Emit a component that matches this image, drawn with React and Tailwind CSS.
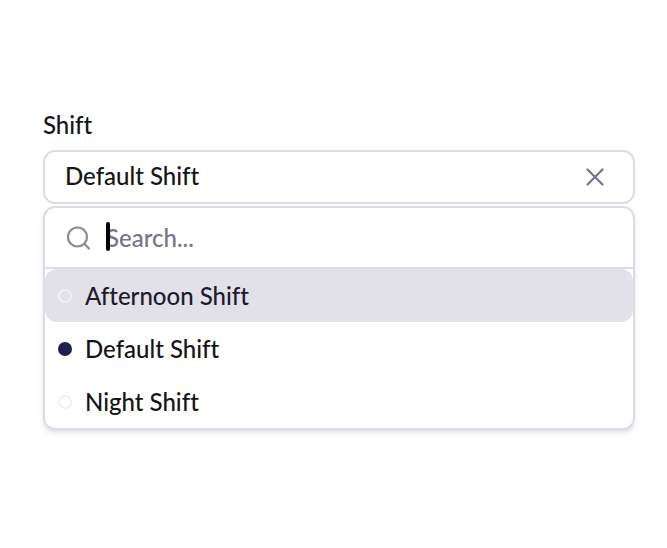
import React, { useState } from "react";

const shifts = ["Afternoon Shift", "Default Shift", "Night Shift"];

const ShiftSelect = () => {
  const [selected, setSelected] = useState("Default Shift");
  const [search, setSearch] = useState("");
  const [active, setActive] = useState("Afternoon Shift");

  const visibleShifts = shifts.filter((shift) =>
    shift.toLowerCase().includes(search.toLowerCase())
  );

  return (
    <div className="w-full">
      <label htmlFor="shift" className="block text-2xl leading-8 text-[#151518]">
        Shift
      </label>

      <div className="mt-[9px] flex h-[54px] items-center rounded-xl border-2 border-[#dcdce8] bg-white pb-0.5 pl-5 pr-7">
        <input
          id="shift"
          type="text"
          readOnly
          value={selected}
          className="min-w-0 flex-1 bg-transparent text-2xl leading-8 text-[#151518] outline-none"
        />
        <button
          type="button"
          aria-label="Clear shift"
          onClick={() => setSelected("")}
          className="pt-0.5 text-[#74748a]"
        >
          <svg className="size-5" viewBox="0 0 20 20" fill="none" stroke="currentColor" strokeWidth="2.2" strokeLinecap="round">
            <path d="M2.5 2.5l15 15M17.5 2.5l-15 15" />
          </svg>
        </button>
      </div>

      <div className="mt-0.5 overflow-hidden rounded-xl border-2 border-[#dcdce8] bg-white shadow-md">
        <div className="flex h-[61px] items-center gap-4 border-b-2 border-[#dcdce8] px-[21px]">
          <svg className="size-6 shrink-0 text-[#8b8b8b]" viewBox="0 0 24 24" fill="none" stroke="currentColor" strokeWidth="2.2" strokeLinecap="round">
            <circle cx="11.5" cy="11" r="9.5" />
            <path d="M18.5 18l4.5 4.5" />
          </svg>
          <div className="relative flex-1">
            <input
              type="text"
              aria-label="Search shifts"
              placeholder="Search..."
              value={search}
              onChange={(e) => setSearch(e.target.value)}
              className="block w-full bg-transparent text-2xl leading-8 text-[#151518] caret-transparent outline-none placeholder:text-[#74748a]"
            />
            {search === "" && (
              <span className="absolute left-0 top-0 h-[29px] w-1 rounded-sm bg-black" />
            )}
          </div>
        </div>

        <div role="radiogroup" aria-label="Shift options">
          {visibleShifts.map((shift) => (
            <label
              key={shift}
              onMouseEnter={() => setActive(shift)}
              className={`flex h-[53px] items-center gap-[13px] rounded-xl pl-[13px] text-2xl leading-8 ${
                active === shift ? "bg-[#e2e1e7] text-[#1d1b2e]" : "text-[#151518]"
              }`}
            >
              <input
                type="radio"
                name="shift-option"
                checked={selected === shift}
                onChange={() => setSelected(shift)}
                className="size-3.5 appearance-none rounded-full border-2 border-[#f0f0f5] checked:border-[#20204f] checked:bg-[#20204f]"
              />
              {shift}
            </label>
          ))}
        </div>
      </div>
    </div>
  );
};

const App = () => {
  return (
    <main className="min-h-screen bg-white pb-10 pl-[43px] pr-8 pt-[109px] font-[Lato,sans-serif] font-medium [font-variant-ligatures:none]">
      <ShiftSelect />
    </main>
  );
};

export default App;
